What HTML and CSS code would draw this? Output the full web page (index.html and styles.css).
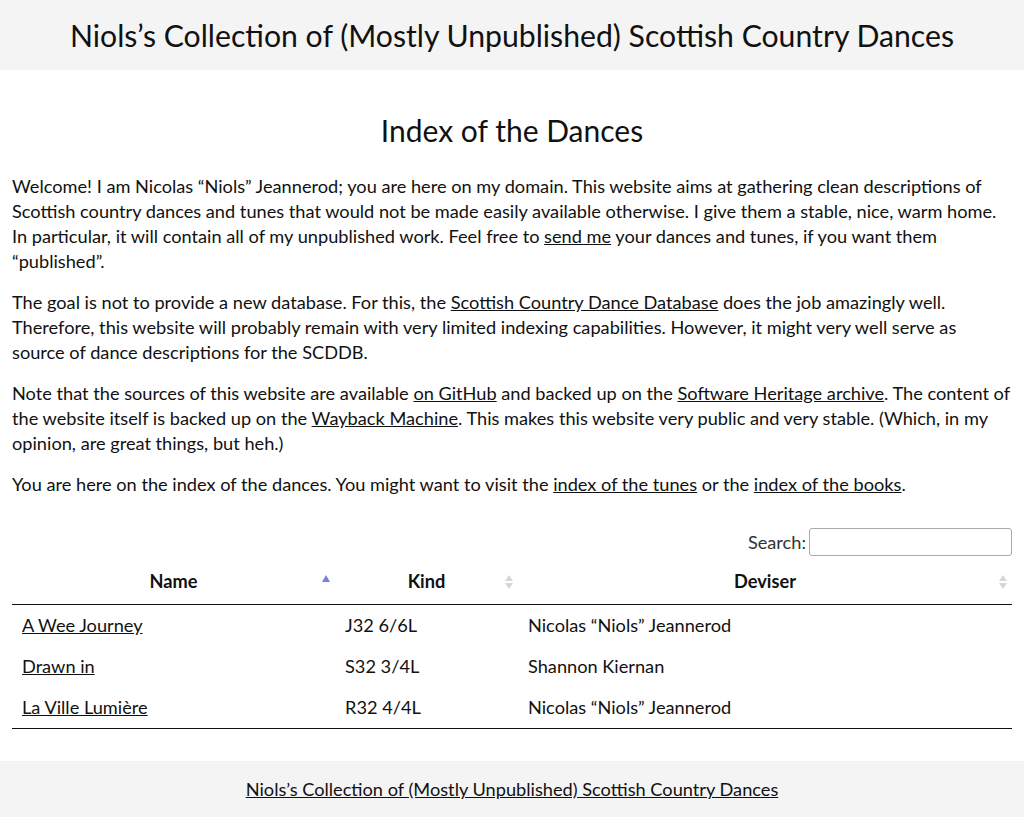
FILE: index.html
```html
<!DOCTYPE html>
<html lang="en">
<head>
<meta charset="utf-8">
<title>Index of the Dances</title>
<link rel="stylesheet" href="styles.css">
</head>
<body>
<header class="site-header">
  <div class="site-title">Niols’s Collection of (Mostly Unpublished) Scottish Country Dances</div>
</header>
<main class="content">
  <h1 class="page-title">Index of the Dances</h1>
  <p>Welcome! I am Nicolas “Niols” Jeannerod; you are here on my domain. This website aims at gathering clean descriptions of Scottish country dances and tunes that would not be made easily available otherwise. I give them a stable, nice, warm home. In particular, it will contain all of my unpublished work. Feel free to <a href="#">send me</a> your dances and tunes, if you want them “published”.</p>
  <p>The goal is not to provide a new database. For this, the <a href="#">Scottish Country Dance Database</a> does the job amazingly well. Therefore, this website will probably remain with very limited indexing capabilities. However, it might very well serve as source of dance descriptions for the SCDDB.</p>
  <p>Note that the sources of this website are available <a href="#">on GitHub</a> and backed up on the <a href="#">Software Heritage archive</a>. The content of the website itself is backed up on the <a href="#">Wayback Machine</a>. This makes this website very public and very stable. (Which, in my opinion, are great things, but heh.)</p>
  <p>You are here on the index of the dances. You might want to visit the <a href="#">index of the tunes</a> or the <a href="#">index of the books</a>.</p>

  <div class="table-wrapper">
    <div class="filter">
      <label class="filter-label">Search:<input class="filter-input" type="search"></label>
    </div>
    <table class="dances">
      <thead>
        <tr>
          <th class="col-name sorted-asc">Name<span class="sort-icon"><span class="up"></span><span class="down"></span></span></th>
          <th class="col-kind sortable">Kind<span class="sort-icon"><span class="up"></span><span class="down"></span></span></th>
          <th class="col-deviser sortable">Deviser<span class="sort-icon"><span class="up"></span><span class="down"></span></span></th>
        </tr>
      </thead>
      <tbody>
        <tr><td><a href="#">A Wee Journey</a></td><td>J32 6/6L</td><td>Nicolas “Niols” Jeannerod</td></tr>
        <tr><td><a href="#">Drawn in</a></td><td>S32 3/4L</td><td>Shannon Kiernan</td></tr>
        <tr><td><a href="#">La Ville Lumière</a></td><td>R32 4/4L</td><td>Nicolas “Niols” Jeannerod</td></tr>
      </tbody>
    </table>
  </div>
</main>
<footer class="site-footer">
  <a href="#">Niols’s Collection of (Mostly Unpublished) Scottish Country Dances</a>
</footer>
</body>
</html>
```

FILE: styles.css
```css
html, body {
  margin: 0;
  padding: 0;
}
body {
  font-family: "Lato", "Open Sans", sans-serif;
  font-size: 18.2px;
  line-height: 25px;
  color: #111;
  background: #fff;
}
a {
  color: #111;
  text-decoration: underline;
}
.site-header {
  background: #f4f4f4;
  height: 70px;
  display: flex;
  align-items: center;
  justify-content: center;
}
.site-title {
  font-size: 30.2px;
  line-height: 38px;
}
.content {
  padding: 0 12px;
}
.page-title {
  font-size: 30px;
  line-height: 38px;
  font-weight: normal;
  text-align: center;
  margin: 41px 0 25px;
}
.content p {
  margin: 0 0 16px;
}
.table-wrapper {
  margin-top: 31px;
}
.filter {
  display: flex;
  justify-content: flex-end;
  margin-bottom: 3px;
}
.filter-label {
  display: flex;
  align-items: center;
  color: #333;
}
.filter-input {
  margin-left: 3px;
  width: 203px;
  height: 28px;
  box-sizing: border-box;
  border: 1px solid #aaa;
  border-radius: 3px;
  background: #fff;
  padding: 4px;
  font: inherit;
}
.dances {
  width: 100%;
  border-collapse: collapse;
  border-spacing: 0;
}
.dances th {
  position: relative;
  font-weight: bold;
  text-align: center;
  padding: 10px;
  border-bottom: 1px solid #111;
}
.col-name { width: 303px; }
.col-kind { width: 163px; }
.dances td {
  padding: 8px 10px;
}
.dances tbody tr:last-child td {
  border-bottom: 1px solid #111;
}
.sort-icon {
  position: absolute;
  right: 5px;
  top: 50%;
  margin-top: -7px;
  height: 14px;
  display: flex;
  flex-direction: column;
  align-items: center;
  gap: 2px;
}
.sort-icon .up,
.sort-icon .down {
  width: 0;
  height: 0;
  border-left: 4px solid transparent;
  border-right: 4px solid transparent;
}
.sort-icon .up {
  border-bottom: 6px solid #d6d6d6;
}
.sort-icon .down {
  border-top: 6px solid #d6d6d6;
}
.sorted-asc .sort-icon .up {
  border-left-width: 4.5px;
  border-right-width: 4.5px;
  border-bottom: 7px solid #7b7ee0;
}
.sorted-asc .sort-icon .down {
  display: none;
}
.site-footer {
  margin-top: 32px;
  background: #f4f4f4;
  text-align: center;
  padding: 16px 0 15px;
}
```
